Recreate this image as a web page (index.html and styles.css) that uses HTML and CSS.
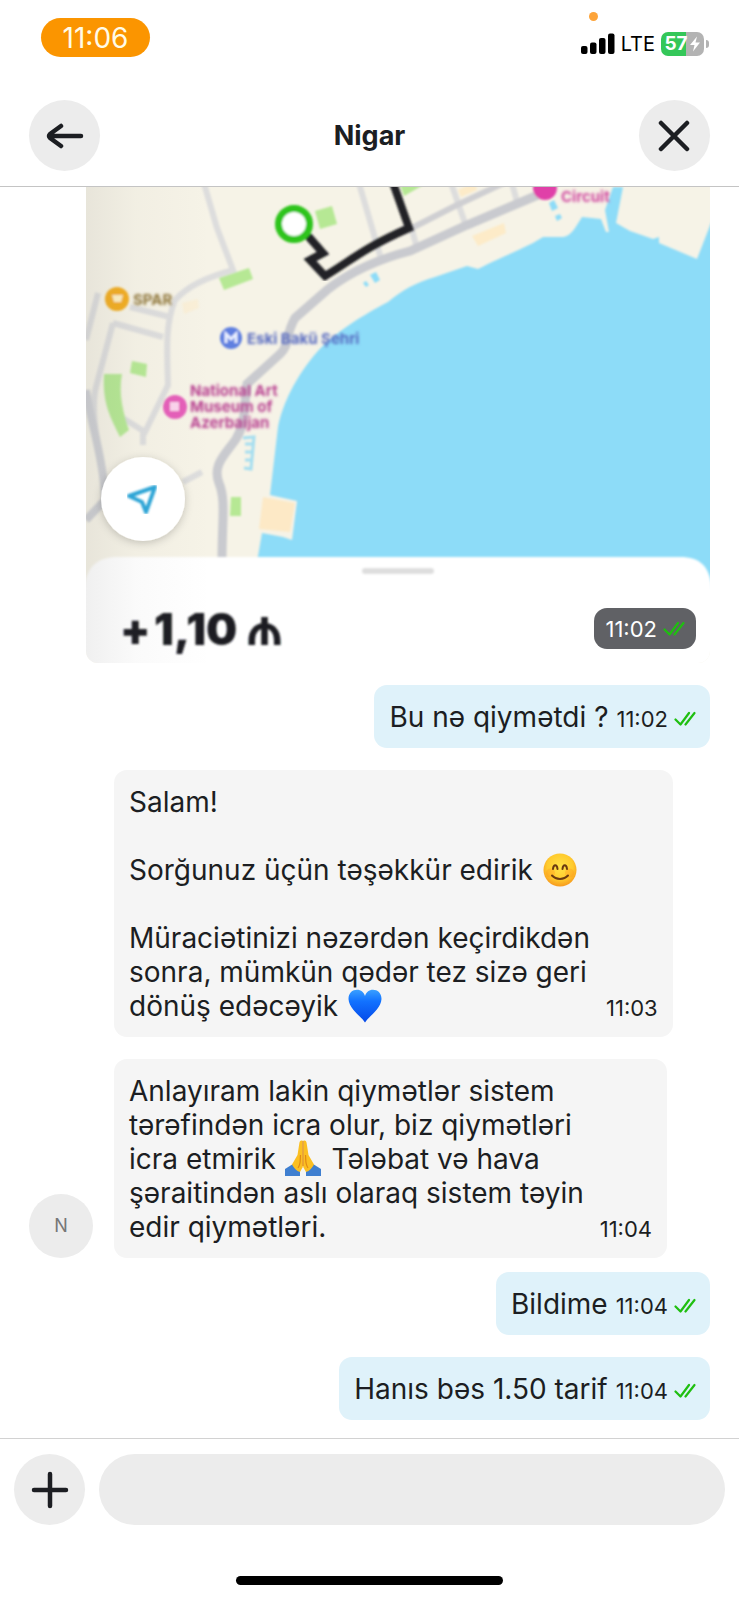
FILE: index.html
```
<!DOCTYPE html>
<html lang="az">
<head>
    <meta charset="UTF-8" />
    <meta name="viewport" content="width=device-width, initial-scale=1" />
    <title>Nigar</title>
    <link rel="stylesheet" href="styles.css">
</head>
<body>
    <svg class="defs" aria-hidden="true">
        <symbol id="ticks" viewBox="0 0 22 16">
            <path d="M1.5 8.5 L6.5 13.5 L15 2 M11.5 13.5 L20.5 2" fill="none" stroke="#1fbf10" stroke-width="2.2" stroke-linecap="round" stroke-linejoin="round"/>
        </symbol>
    </svg>

    <div class="status">
        <span class="clock">11:06</span>
        <span class="mic-dot"></span>
        <div class="signals">
            <svg width="34" height="22" viewBox="0 0 34 22">
                <rect x="0" y="13" width="6.5" height="8" rx="2"/>
                <rect x="9" y="9.5" width="6.5" height="11.5" rx="2"/>
                <rect x="18" y="5" width="6.5" height="16" rx="2"/>
                <rect x="27" y="0.5" width="6.5" height="20.5" rx="2"/>
            </svg>
            <span class="network">LTE</span>
            <div class="battery">
                <span>57</span>
                <svg width="12" height="16" viewBox="0 0 12 16"><path d="M8 0.5 L1 9 H5.5 L4 15.5 L11 6.5 H6.5 Z" fill="#fff"/></svg>
            </div>
        </div>
    </div>

    <header class="header">
        <button type="button" class="round" aria-label="Geri">
            <svg width="38" height="26" viewBox="0 0 38 26"><path d="M35 13 H4 M15 3 L4 11 Q2 13 4 15 L15 23"/></svg>
        </button>
        <h1>Nigar</h1>
        <button type="button" class="round" aria-label="Bağla">
            <svg width="32" height="32" viewBox="0 0 32 32"><path d="M3 3 L29 29 M29 3 L3 29"/></svg>
        </button>
    </header>

    <main class="chat">
        <div class="photo">
            <svg class="map" viewBox="86 187 624 476" role="img" aria-label="Xəritə">
                <defs>
                    <linearGradient id="shade" x1="0" x2="1" y1="0" y2="0">
                        <stop offset="0" stop-color="#666" stop-opacity="0.1"/>
                        <stop offset="0.08" stop-color="#666" stop-opacity="0.03"/>
                        <stop offset="0.2" stop-color="#666" stop-opacity="0"/>
                    </linearGradient>
                    <filter id="soft" x="-5%" y="-5%" width="110%" height="110%"><feGaussianBlur stdDeviation="1.2"/></filter>
                    <filter id="softer" x="-10%" y="-20%" width="120%" height="140%"><feGaussianBlur stdDeviation="1.6"/></filter>
                    <filter id="shadow" x="-30%" y="-30%" width="160%" height="160%"><feDropShadow dx="0" dy="2" stdDeviation="4" flood-opacity="0.2"/></filter>
                </defs>
                <rect x="86" y="187" width="624" height="476" fill="#f6f3e7"/>
                <g filter="url(#soft)">
                    <!-- side streets -->
                    <g fill="none" stroke="#dddddd" stroke-width="6">
                        <path d="M203 180 L217 228 L233 270 C205 278 188 286 175 300 C165 325 167 350 168 385 L145 432 L118 415"/>
                        <path d="M130 307 L170 317 M113 323 L163 337 M113 323 L96 387 C90 410 98 450 106 490 M98 293 L86 340 M143 430 V445 M183 482 L202 472"/>
                        <path d="M358 180 L382 262 M450 180 L466 226 M511 180 L518 205 M412 230 L417 248"/>
                    </g>
                    <path d="M86 390 C90 420 104 460 105 500 L86 520" fill="none" stroke="#cfd0d4" stroke-width="8"/>
                    <!-- coast road -->
                    <path d="M545 192 L467 225 L410 251 C375 260 350 272 327 290 L295 318 C285 335 290 345 280 354 L247 384 C244 410 245 425 236 439 C225 455 212 465 219 483 C226 500 222 520 222 560" fill="none" stroke="#c9cacf" stroke-width="9"/>
                    <path d="M410 229 L455 206 L510 180" fill="none" stroke="#cfcfd2" stroke-width="6"/>
                    <!-- parks -->
                    <g fill="#b6e894">
                        <path d="M219 278 L249 268 L253 279 L224 290 Z"/>
                        <path d="M315 211 L332 206 L337 224 L320 229 Z"/>
                        <path d="M104 374 H122 C118 395 124 415 129 430 L120 437 C112 420 102 405 104 374 Z"/>
                        <path d="M132 361 L147 364 L146 377 L130 373 Z"/>
                        <path d="M231 497 H241 V516 H230 Z"/>
                        <path d="M398 180 L432 180 L404 196 Z"/>
                    </g>
                    <g fill="#fdebc8">
                        <path d="M472 236 L504 223 L506 233 L478 246 Z"/>
                        <path d="M458 190 L475 182 L477 190 L461 197 Z"/>
                        <path d="M182 303 L198 299 L199 308 L184 314 Z" opacity="0.5"/>
                    </g>
                    <!-- bay -->
                    <path d="M257 562 L262 533 L283 537 L292 540 L297 501 L270 495 L278 427 C282 405 296 376 317 352 C335 332 365 314 388 302 C402 290 415 283 435 277 L467 266 L478 269 C500 258 515 252 533 243 L543 237 L563 237 C572 236 576 226 582 217 L601 219 L606 232 H609 L605 210 L613 187 H623 L616 223 L630 231 L653 239 L659 237 V243 L697 259 L716 210 V620 H257 Z" fill="#8ddcf8"/>
                    <path d="M263 497 L295 503 L290 532 L259 529 Z" fill="#fde9c6"/>
                    <path d="M370 275 L376 272 L380 280 L375 283 Z M363 283 L366 281 L369 285 L366 287 Z M549 203 L554 200 L558 208 L552 211 Z M555 216 L560 214 L562 218 L557 221 Z" fill="#8ddcf8"/>
                    <path d="M243 438 L254 437 L251 469 L244 468 M245 444 H253 M245 452 H252 M245 460 H252" fill="none" stroke="#a5def0" stroke-width="3"/>
                    <!-- places -->
                    <circle cx="117" cy="299" r="12" fill="#f3ae22"/>
                    <path d="M112 295 H123 L121 302 H114 Z" fill="#fff0c0"/>
                    <circle cx="231" cy="338" r="11" fill="#5f7fe0"/>
                    <path d="M226 343 V334 L231 339 L236 334 V343" fill="none" stroke="#e9efff" stroke-width="3"/>
                    <circle cx="175" cy="407" r="12" fill="#e55fb9"/>
                    <rect x="170" y="402" width="9" height="9" fill="#fbd3ec"/>
                    <circle cx="545" cy="188" r="12" fill="#e03fa8"/>
                </g>
                <g class="places" filter="url(#softer)">
                    <text x="133" y="305" fill="#8f7638">SPAR</text>
                    <text x="247" y="344" fill="#5468c0">Eski Bakü Şehri</text>
                    <text x="190" y="396" fill="#b83f90">National Art</text>
                    <text x="190" y="412" fill="#b83f90">Museum of</text>
                    <text x="190" y="428" fill="#b83f90">Azerbaijan</text>
                    <text x="561" y="202" fill="#d04aa0">Circuit</text>
                </g>
                <!-- route -->
                <g filter="url(#soft)">
                    <path d="M308 236 L323 253 L310 260 L325 276 C355 258 360 250 409 228 L392 180" fill="none" stroke="#222327" stroke-width="8"/>
                    <circle cx="294" cy="224" r="15.5" fill="#fff" stroke="#2fc41c" stroke-width="7"/>
                </g>
                <!-- bottom sheet -->
                <g filter="url(#soft)">
                    <path d="M84 690 V590 C86 566 98 557 118 557 H680 C700 557 710 566 712 590 V690 Z" fill="#fff"/>
                    <rect x="362" y="568" width="72" height="6" rx="3" fill="#dedede"/>
                </g>
                <g class="price" filter="url(#soft)">
                    <text x="120" y="645">+</text>
                    <text x="154" y="645">1,10</text>
                    <text x="245" y="645" class="manat">₼</text>
                </g>
                <rect x="86" y="187" width="624" height="476" fill="url(#shade)"/>
                <g filter="url(#shadow)">
                    <circle cx="143" cy="499" r="42" fill="#fff"/>
                </g>
                <path d="M129 496 L155 487 L146 512 L142 502 Z" fill="none" stroke="#2ea5d6" stroke-width="4" stroke-linejoin="round" filter="url(#soft)"/>
            </svg>
            <div class="badge">
                <time>11:02</time>
                <svg class="ticks"><use href="#ticks"/></svg>
            </div>
        </div>

        <div class="bubble out">
            <p>Bu nə qiymətdi ?</p>
            <time>11:02</time>
            <svg class="ticks"><use href="#ticks"/></svg>
        </div>

        <div class="bubble in">
            <p>Salam!<br><br>Sorğunuz üçün təşəkkür edirik
                <svg class="emoji" viewBox="0 0 34 34" role="img" aria-label="gülümsəyən üz">
                    <defs>
                        <radialGradient id="face" cx="0.5" cy="0.4" r="0.6">
                            <stop offset="0" stop-color="#ffe246"/>
                            <stop offset="0.65" stop-color="#ffcb2e"/>
                            <stop offset="1" stop-color="#f79a1d"/>
                        </radialGradient>
                    </defs>
                    <circle cx="17" cy="17" r="16.5" fill="url(#face)"/>
                    <circle cx="7.5" cy="20" r="4.5" fill="#ff8a1c" opacity="0.3"/>
                    <circle cx="26.5" cy="20" r="4.5" fill="#ff8a1c" opacity="0.3"/>
                    <path d="M10 16 C10.5 11 14 11 14.5 16 M19.5 16 C20 11 23.5 11 24 16" fill="none" stroke="#6b3a10" stroke-width="2" stroke-linecap="round"/>
                    <path d="M9 22.5 C13 27 21 27 25 22.5" fill="none" stroke="#6b3a10" stroke-width="2" stroke-linecap="round"/>
                </svg><br><br>Müraciətinizi nəzərdən keçirdikdən<br>sonra, mümkün qədər tez sizə geri<br>dönüş edəcəyik
                <svg class="emoji" viewBox="0 0 34 34" role="img" aria-label="mavi ürək">
                    <defs>
                        <linearGradient id="heart" x1="0" x2="0" y1="0" y2="1">
                            <stop offset="0" stop-color="#3aa0ff"/>
                            <stop offset="0.35" stop-color="#1272ff"/>
                            <stop offset="1" stop-color="#0548e8"/>
                        </linearGradient>
                    </defs>
                    <path d="M17 33.5 C13 27 1 20 0.5 10 C0.5 4 4.5 0.8 9 0.8 C13 0.8 16 3.5 17 7 C18 3.5 21 0.8 25 0.8 C29.5 0.8 33.5 4 33.5 10 C33 20 21 27 17 33.5 Z" fill="url(#heart)"/>
                </svg>
            </p>
            <time>11:03</time>
        </div>

        <div class="row">
            <span class="avatar">N</span>
            <div class="bubble in">
                <p>Anlayıram lakin qiymətlər sistem<br>tərəfindən icra olur, biz qiymətləri<br>icra etmirik
                    <svg class="emoji wide" viewBox="0 0 36 36" role="img" aria-label="dua edən əllər">
                        <path d="M0 29 L8 24 L15 31 V36 H0 Z" fill="#3f7fd0"/>
                        <path d="M36 29 L28 24 L21 31 V36 H36 Z" fill="#3f7fd0"/>
                        <path d="M17.5 0.5 C15.5 0 14.5 1 14.3 3.5 L12.5 15 L7 24.5 C9 28 11.5 31 15 32 L17.8 27 Z" fill="#fbbf22"/>
                        <path d="M18.5 0.5 C20.5 0 21.5 1 21.7 3.5 L23.5 15 L29 24.5 C27 28 24.5 31 21 32 L18.2 27 Z" fill="#fbbf22"/>
                        <path d="M18 1 V26 M15.5 15 C15 20 16 24 13 28 M20.5 15 C21 20 20 24 23 28" fill="none" stroke="#e08a14" stroke-width="1.2"/>
                    </svg>
                    Tələbat və hava<br>şəraitindən aslı olaraq sistem təyin<br>edir qiymətləri.</p>
                <time>11:04</time>
            </div>
        </div>

        <div class="bubble out follow">
            <p>Bildime</p>
            <time>11:04</time>
            <svg class="ticks"><use href="#ticks"/></svg>
        </div>

        <div class="bubble out">
            <p>Hanıs bəs 1.50 tarif</p>
            <time>11:04</time>
            <svg class="ticks"><use href="#ticks"/></svg>
        </div>
    </main>

    <footer class="composer">
        <button type="button" class="round" aria-label="Əlavə et">
            <svg width="38" height="38" viewBox="0 0 38 38"><path d="M19 3 V35 M3 19 H35"/></svg>
        </button>
        <input type="text" aria-label="Mesaj">
    </footer>
    <div class="home"></div>
</body>
</html>
```
FILE: styles.css
```
*{
    margin: 0;
    padding: 0;
    box-sizing: border-box;
}
body{
    background: #fff;
    color: #1c1e22;
    font-family: Inter, "Liberation Sans", sans-serif;
    font-size: 28px;
    line-height: 34px;
}
.defs{
    display: none;
}

/* status bar */
.status{
    position: relative;
    display: flex;
    justify-content: space-between;
    height: 100px;
    padding: 18px 30px 0 41px;
}
.clock{
    width: 109px;
    height: 39px;
    border-radius: 20px;
    background: #fb9500;
    color: #fffbe8;
    line-height: 40px;
    text-align: center;
}
.mic-dot{
    position: absolute;
    top: 12px;
    right: 141px;
    width: 9px;
    height: 9px;
    border-radius: 50%;
    background: #fda43a;
}
.signals{
    display: flex;
    align-items: center;
    gap: 6px;
    height: 24px;
    margin-top: 14px;
}
.network{
    color: #000;
    font-size: 20px;
}
.battery{
    position: relative;
    display: flex;
    align-items: center;
    justify-content: center;
    gap: 1px;
    width: 43px;
    height: 24px;
    margin-right: 5px;
    border-radius: 7px;
    background: linear-gradient(90deg, #34c759 57%, #b3b3b3 57%);
    color: #fff;
    font-size: 19px;
    font-weight: 700;
}
.battery::after{
    content: "";
    position: absolute;
    right: -5px;
    top: 8px;
    width: 3px;
    height: 8px;
    border-radius: 0 4px 4px 0;
    background: #b3b3b3;
}

/* header */
.header{
    display: flex;
    align-items: flex-start;
    justify-content: space-between;
    height: 87px;
    padding: 0 29px;
    border-bottom: 1px solid #c4c4c4;
}
.header h1{
    font-size: 27px;
    font-weight: 700;
    line-height: 71px;
}
.round{
    display: flex;
    flex: none;
    align-items: center;
    justify-content: center;
    width: 71px;
    height: 71px;
    border: none;
    border-radius: 50%;
    background: #ececec;
    cursor: pointer;
}
.round path{
    fill: none;
    stroke: #1c1e22;
    stroke-width: 4.5;
    stroke-linecap: round;
    stroke-linejoin: round;
}

/* messages */
.chat{
    display: flex;
    flex-direction: column;
    align-items: flex-start;
    gap: 22px;
    padding: 0 29px 18px;
}
.photo{
    position: relative;
    align-self: stretch;
    margin-left: 57px;
    border-radius: 0 0 12px 12px;
    overflow: hidden;
}
.map{
    display: block;
    width: 100%;
}
.places{
    font-size: 15px;
    font-weight: 700;
}
.price{
    font-size: 44px;
    font-weight: 900;
    fill: #1c1e22;
}
.manat{
    font-size: 52px;
    font-weight: 600;
}
.badge{
    position: absolute;
    right: 14px;
    bottom: 14px;
    display: flex;
    align-items: center;
    gap: 6px;
    height: 41px;
    padding: 0 11px;
    border-radius: 13px;
    background: #606165;
    color: #fff;
}
.bubble{
    display: flex;
    align-items: last baseline;
    gap: 16px;
    padding: 15px 15px 14px;
    border-radius: 13px;
}
time{
    font-size: 22px;
    line-height: 24px;
}
.in{
    margin-left: 85px;
    background: #f5f5f5;
}
.out{
    align-self: flex-end;
    gap: 8px;
    padding-right: 14px;
    background: #dff2fa;
}
.out .ticks{
    margin-left: -2px;
}
.ticks{
    width: 22px;
    height: 16px;
}
.row{
    display: flex;
    align-items: flex-end;
    gap: 21px;
}
.row .in{
    margin-left: 0;
}
.avatar{
    width: 64px;
    height: 64px;
    border-radius: 50%;
    background: #ececec;
    color: #777;
    font-size: 18px;
    line-height: 64px;
    text-align: center;
}
.follow{
    margin-top: -8px;
}
.emoji{
    width: 34px;
    height: 34px;
    margin: -7px 1px 0 2px;
    vertical-align: -7px;
}
.wide{
    width: 36px;
    height: 36px;
    margin: -9px 3px 0 1px;
}

/* composer */
.composer{
    display: flex;
    gap: 14px;
    padding: 15px 14px 51px;
    border-top: 1px solid #d2d2d2;
}
.composer input{
    flex: 1;
    min-width: 0;
    height: 71px;
    padding: 0 28px;
    border: none;
    border-radius: 36px;
    background: #ececec;
    font: inherit;
}
.home{
    width: 36%;
    height: 9px;
    margin: 0 auto 14px;
    border-radius: 5px;
    background: #000;
}
```
